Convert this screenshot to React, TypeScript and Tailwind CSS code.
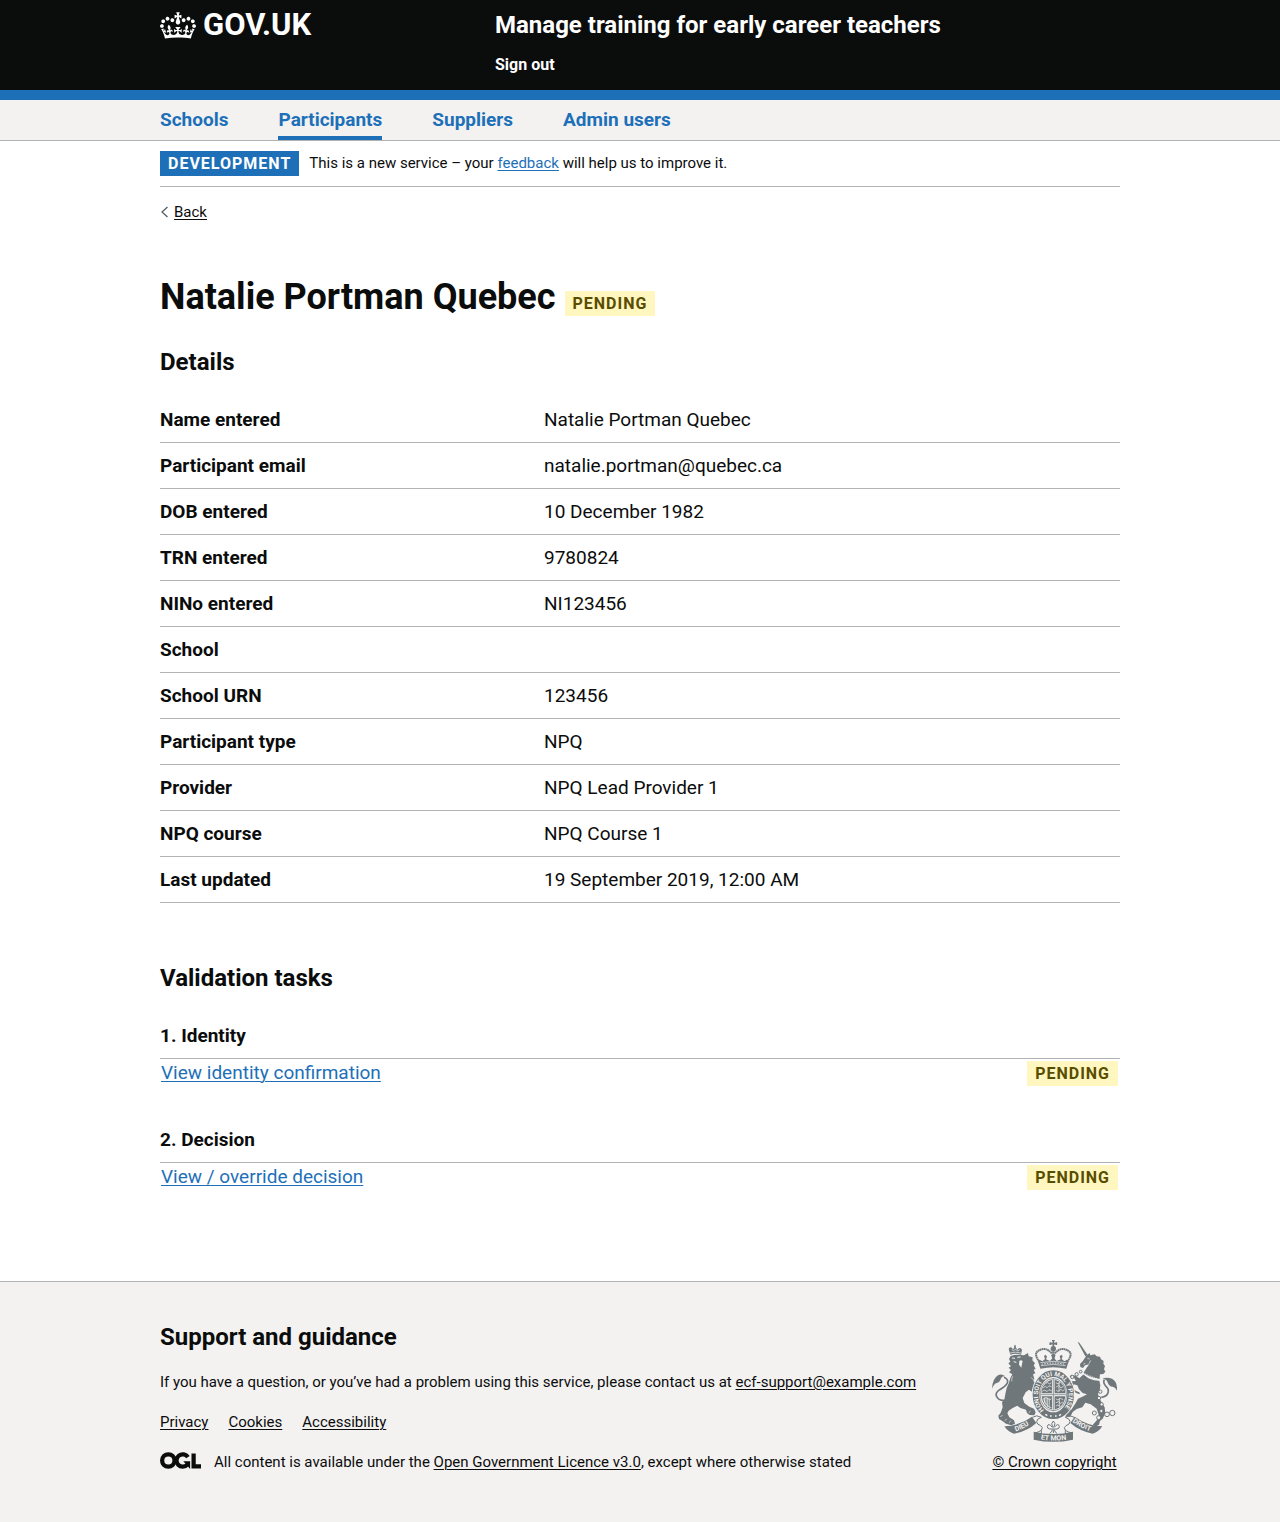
const link = "text-[#1d70b8] underline decoration-1 underline-offset-2";
const darkLink = "text-[#0b0c0c] underline decoration-1 underline-offset-2";
const container = "mx-auto w-full max-w-[960px] max-[990px]:px-4 max-[990px]:max-w-none";

const navItems = [
  { label: "Schools", current: false },
  { label: "Participants", current: true },
  { label: "Suppliers", current: false },
  { label: "Admin users", current: false },
];

const details: [string, string][] = [
  ["Name entered", "Natalie Portman Quebec"],
  ["Participant email", "natalie.portman@quebec.ca"],
  ["DOB entered", "10 December 1982"],
  ["TRN entered", "9780824"],
  ["NINo entered", "NI123456"],
  ["School", ""],
  ["School URN", "123456"],
  ["Participant type", "NPQ"],
  ["Provider", "NPQ Lead Provider 1"],
  ["NPQ course", "NPQ Course 1"],
  ["Last updated", "19 September 2019, 12:00 AM"],
];

function PendingTag() {
  return (
    <strong className="inline-block bg-[#fff7bf] px-2 pt-[5px] pb-1 text-[16px] leading-[16px] font-bold tracking-[1px] text-[#594d00] uppercase">
      Pending
    </strong>
  );
}

function Crown() {
  return (
    <svg aria-hidden="true" className="h-[27px] w-9 shrink-0 fill-white" viewBox="0 0 132 97">
      <path
        fillRule="evenodd"
        d="M25 30.2c3.5 1.5 7.7-.2 9.1-3.7 1.5-3.6-.2-7.8-3.9-9.2-3.6-1.4-7.6.3-9.1 3.9-1.4 3.5.3 7.5 3.9 9zM9 39.5c3.6 1.5 7.8-.2 9.2-3.7 1.5-3.6-.2-7.8-3.9-9.1-3.6-1.5-7.6.2-9.1 3.8-1.4 3.5.3 7.5 3.8 9zM4.4 57.2c3.5 1.5 7.7-.2 9.1-3.8 1.5-3.6-.2-7.7-3.9-9.1-3.5-1.5-7.6.3-9.1 3.8-1.4 3.5.3 7.6 3.9 9.1zm38.3-21.4c3.5 1.5 7.7-.2 9.1-3.8 1.5-3.6-.2-7.7-3.9-9.1-3.6-1.5-7.6.3-9.1 3.8-1.3 3.6.4 7.7 3.9 9.1zm64.4-5.6c-3.6 1.5-7.8-.2-9.1-3.7-1.5-3.6.2-7.8 3.8-9.2 3.6-1.4 7.7.3 9.2 3.9 1.3 3.5-.4 7.5-3.9 9zm15.9 9.3c-3.6 1.5-7.7-.2-9.1-3.7-1.5-3.6.2-7.8 3.7-9.1 3.6-1.5 7.7.2 9.2 3.8 1.5 3.5-.3 7.5-3.8 9zm4.7 17.7c-3.6 1.5-7.8-.2-9.2-3.8-1.5-3.6.2-7.7 3.9-9.1 3.6-1.5 7.7.3 9.2 3.8 1.3 3.5-.4 7.6-3.9 9.1zM89.3 35.8c-3.6 1.5-7.8-.2-9.2-3.8-1.4-3.6.2-7.7 3.9-9.1 3.6-1.5 7.7.3 9.2 3.8 1.4 3.6-.3 7.7-3.9 9.1zM69.7 17.7l8.9 4.7V9.3l-8.9 2.8c-.2-.3-.5-.6-.9-.9L72.4 0H59.6l3.5 11.2c-.3.3-.6.5-.9.9l-8.8-2.8v13.1l8.8-4.7c.3.3.6.7.9.9l-5 15.4v.1c-.2.8-.4 1.6-.4 2.4 0 4.1 3.1 7.5 7 8.1h.2c.3 0 .7.1 1 .1.4 0 .7 0 1-.1h.2c4-.6 7.1-4.1 7.1-8.1 0-.8-.1-1.7-.4-2.4V34l-5.1-15.4c.4-.2.7-.6 1-.9zM66 92.8c16.9 0 32.8 1.1 47.1 3.2 4-16.9 8.9-26.7 14-33.5l-9.6-3.4c1 4.9 1.1 7.2 0 10.2-1.5-1.4-3-4.3-4.2-8.7L108.6 76c2.8-2 5-3.2 7.5-3.3-4.4 9.4-10 11.9-13.6 11.2-4.3-.8-6.3-4.6-5.6-7.9 1-4.7 5.7-5.9 8-.5 4.3-8.7-3-11.4-7.6-8.8 7.1-7.2 7.9-13.5 2.1-21.1-8 6.1-8.1 12.3-4.5 20.8-4.7-5.4-12.1-2.5-9.5 6.2 3.4-5.2 7.9-2 7.2 3.1-.6 4.3-6.4 7.8-13.5 7.2-10.3-.9-10.9-8-11.2-13.8 2.5-.5 7.1 1.8 11 7.3L80.2 60c-4.1 4.4-8 5.3-12.3 5.4 1.4-4.4 8-11.6 8-11.6H55.5s6.4 7.2 7.9 11.6c-4.2-.1-8-1-12.3-5.4l1.4 16.4c3.9-5.5 8.5-7.7 10.9-7.3-.3 5.8-.9 12.8-11.1 13.8-7.2.6-12.9-2.9-13.5-7.2-.7-5 3.8-8.3 7.1-3.1 2.7-8.7-4.6-11.6-9.4-6.2 3.7-8.5 3.6-14.7-4.6-20.8-5.8 7.6-5 13.9 2.2 21.1-4.7-2.6-11.9.1-7.7 8.8 2.3-5.5 7.1-4.2 8.1.5.7 3.3-1.3 7.1-5.7 7.9-3.5.7-9-1.8-13.5-11.2 2.5.1 4.7 1.3 7.5 3.3l-4.7-15.4c-1.2 4.4-2.7 7.2-4.3 8.7-1.1-3-.9-5.3 0-10.2l-9.5 3.4c5 6.9 9.9 16.7 14 33.5 14.8-2.1 30.8-3.2 47.7-3.2z"
      />
    </svg>
  );
}

function OglLogo() {
  return (
    <svg role="img" aria-label="OGL" className="h-[17px] w-[41px] shrink-0" viewBox="0 0 483 196">
      <g fill="none" stroke="#0b0c0c" strokeWidth="50">
        <circle cx="98" cy="98" r="73" />
        <path d="M329 59A73 73 0 1 0 322 147" />
        <path d="M396 16V168H483" />
      </g>
      <path fill="#0b0c0c" d="M275 106h80v88h-3z" />
    </svg>
  );
}

function RoyalArms() {
  const grey = "#6f777b";
  const pale = "#f3f2f1";
  return (
    <svg aria-hidden="true" className="h-[102px] w-[125px]" viewBox="66 60 375 306">
      <defs>
        <path id="garter" d="M222 270A46 57 0 1 1 278 270" />
        <path id="scroll-left" d="M137 334Q165 325 192 304" />
        <path id="scroll-mid" d="M212 358Q250 365 298 358" />
        <path id="scroll-right" d="M307 305Q334 326 366 335" />
      </defs>

      {/* lion */}
      <g fill={grey}>
        <path d="M122 108Q140 102 162 106L174 99 176 109 188 112 187 121 195 130 191 136 197 147 191 149 196 160 189 163 193 176 190 184 203 191 207 200 200 201 206 207 197 210 203 222 206 234 197 233 190 218 177 209 167 217 158 234 163 249 178 260 192 266 197 277 193 286 179 285 171 279 168 269 151 264 142 257 128 264 116 272 112 280 118 292 132 301 135 311 124 316 108 311 97 303 87 297 85 287 92 278 98 262 96 247 103 239 106 222 110 204 117 188 121 174 127 163 117 157 123 150 116 143 123 139 115 130 121 125 117 117z" />
        <path d="M121 104l-5-17q2-8 10-4l3 6 4-8-1-3 3-4 3 4-1 4 5 7 5-5q7-1 9 6l-3 14q-16-5-32 0z" />
        <path d="M66 206q1-30 19-41 12-4 20 4-9-1-12 6-3 12-13 14-8 2-14 17z" />
      </g>
      <path d="M102 172q16 7 9 19-6 10-22 18-15 10-9 21 8 14 24 10" fill="none" stroke={grey} strokeWidth="5" />
      <g fill="none" stroke={pale}>
        <path d="M120 99q17-5 33 0M126 88l4 5 6-5 8 5 5-4" strokeWidth="2" />
        <path d="M126 114l9 1M142 112l10-1M131 125l8 2" strokeWidth="3" />
        <path d="M128 169q-5 10-2 15M183 172l11 11" strokeWidth="2" />
        <path d="M91 290l7-4M104 302l6-5M118 308l5-6M176 278l6-5" strokeWidth="2" />
      </g>
      <path d="M148 122q6-3 10 1l-2 9-2 11-7-9z" fill={pale} />

      {/* unicorn */}
      <g fill={grey}>
        <path d="M323 66l5 2 25 37-7 4z" />
        <path d="M350 106L359 99 361 106 374 103 380 109 390 110 393 118 401 123 400 131 405 138 402 147 406 155 400 162 390 163 388 177 341 158 351 142 358 133 345 136 339 144 331 141 330 132 338 124z" />
        <path d="M341 163L355 175 372 181 388 182 391 196 389 212 384 222 389 236 396 249 404 262 406 280 398 296 390 303 387 314 376 320 368 315 381 300 386 284 380 266 362 253 346 248 337 262 320 267 308 276 301 290 286 290 291 278 305 268 317 249 324 236 340 229 351 223 338 219 327 208 322 196 311 193 307 204 318 213 328 217 330 223 320 220 304 209 300 196 306 184 318 183 312 173 299 171 303 164 317 167 328 175z" />
        <path d="M441 212q2-27-15-36-16-6-29 0 12 1 15 9 5 15 16 15 8 1 13 12z" />
      </g>
      <path d="M394 232q17-3 20-14 4-10-6-19-10-11-5-20" fill="none" stroke={grey} strokeWidth="5" />
      <path d="M338 160Q358 178 390 180" fill="none" stroke={pale} strokeWidth="3" />
      <path d="M343 157Q362 172 389 173" fill="none" stroke={grey} strokeWidth="5" strokeDasharray="4 2" />
      <path d="M352 115l7 2M340 133l6-4M362 121l-5 10" fill="none" stroke={pale} strokeWidth="2" />
      <g fill={pale} stroke={grey} strokeWidth="3">
        <circle cx="391" cy="215" r="5" />
        <circle cx="387" cy="234" r="5" />
        <circle cx="395" cy="253" r="5" />
        <circle cx="394" cy="273" r="5" />
        <circle cx="373" cy="279" r="6" />
        <circle cx="386" cy="293" r="6" />
        <circle cx="411" cy="283" r="7" />
        <circle cx="427" cy="279" r="8" />
        <circle cx="307" cy="171" r="5" />
        <circle cx="320" cy="163" r="5" />
        <circle cx="332" cy="155" r="4" />
      </g>

      {/* crown */}
      <g fill="none" stroke={grey}>
        <path d="M212 130Q190 103 203 94Q226 77 246 101M288 130Q310 103 297 94Q274 77 254 101" strokeWidth="6" strokeDasharray="5 1" />
        <path d="M250 60v22M240 71h20M246 61h8M241 67v8M259 67v8" strokeWidth="5" />
        <path d="M250 90v33" strokeWidth="7" strokeDasharray="5 1" />
      </g>
      <g fill={grey}>
        <circle cx="250" cy="86" r="8" />
        <path d="M204 124l5-5 8 5 8-7-3-9 5-4 4 6-3 8 12 5 7-8-4-10 7-4 7 4-4 10 7 8 12-5-3-8 4-6 5 4-3 9 8 7 8-5 5 5-7 22q-39-9-78 0z" />
      </g>
      <path d="M211 128q39-8 78 0M213 137q37-8 74 0" fill="none" stroke={pale} strokeWidth="2" />
      <path d="M215 133q35-8 70 0" fill="none" stroke={pale} strokeWidth="3" strokeDasharray="4 4" />

      {/* garter */}
      <ellipse cx="250" cy="224" rx="65" ry="76" fill={pale} />
      <ellipse cx="250" cy="224" rx="52" ry="63" fill="none" stroke={grey} strokeWidth="20" />
      <text fontFamily="Roboto" fontSize="19" fontWeight="700" fill={pale}>
        <textPath href="#garter">HONI SOIT QUI MAL Y PENSE</textPath>
      </text>
      <path d="M226 283l6 4M240 288h5M255 288h5M267 287l6-4" stroke={pale} strokeWidth="4" />

      {/* quartered shield */}
      <g transform="translate(250 224) scale(0.95 1.15) translate(-250 -223)">
        <circle cx="250" cy="223" r="42" fill={pale} stroke={grey} strokeWidth="2" />
        <path d="M213 219v-8q6-21 33-27v35zM254 184q29 5 34 29v6h-34zM213 227h33v35q-28-6-33-35zM254 227h34q-4 29-34 35z" fill={grey} />
        <path d="M250 181v84M209 223h82" stroke={grey} strokeWidth="2" />
        <g fill="none" stroke={pale} strokeWidth="2">
          <path d="M218 205l7-4 5 4 6-5 8 2M215 214l8-3 7 4 6-5 9 3M226 194l6-3 5 4 7-3" />
          <path d="M258 192l7 3 7-5M259 203l9-4 5 6 9-3M259 211l6 4 9-6 5 4 7-3M268 190v25" />
          <path d="M219 233q8 22 25 24M222 231v14M227 231v20M232 231v24M237 231v26M219 233q10-6 15 1t10-1" />
          <path d="M258 234l7 3 6-5 10 4M258 244l9-3 5 5 8-4M258 253l6-3 7 3M269 232v22" />
        </g>
      </g>

      {/* scroll */}
      <g fill={grey}>
        <path d="M103 319Q147 318 186 290L199 309Q172 334 132 341Q114 336 103 319z" />
        <path d="M397 319Q353 318 314 290L301 309Q328 333 368 341Q386 336 397 319z" />
        <path d="M191 335Q250 349 309 335V359Q250 372 191 359z" />
      </g>
      <g fill="none" stroke={grey} strokeWidth="3">
        <path d="M187 292q13-9 27 0-14 4-14 13 0 8 12 12 9 4 2 14-9 5-20 9M214 331v10" />
        <path d="M313 292q-13-9-27 0 14 4 14 13 0 8-12 12-9 4-2 14 9 5 20 9M286 331v10" />
      </g>
      <g fontFamily="Roboto" fontSize="21" fontWeight="700" fill={pale}>
        <text>
          <textPath href="#scroll-left">DIEU</textPath>
        </text>
        <text>
          <textPath href="#scroll-mid">ET MON</textPath>
        </text>
        <text>
          <textPath href="#scroll-right">DROIT</textPath>
        </text>
      </g>

      {/* badge between the scrolls */}
      <path
        d="M250 303q-8 8-3 15l3 4 3-4q5-7-3-15zM247 322q-12-15-15-3-1 7 7 8M253 322q12-15 15-3 1 7-7 8M239 327h22M247 329q-1 8-8 11M253 329q1 8 8 11M250 329v10"
        fill="none"
        stroke={grey}
        strokeWidth="3"
      />
    </svg>
  );
}

function Task({ title, action }: { title: string; action: string }) {
  return (
    <section className="mb-[30px]">
      <h3 className="border-b border-[#b1b4b6] py-[10px] text-[19px] leading-[25px] font-bold">{title}</h3>
      <div className="flex items-start justify-between px-px pt-px">
        <a href="#" className={`text-[19px] leading-[25px] ${link}`}>
          {action}
        </a>
        <span className="flex pt-px pr-px pb-px">
          <PendingTag />
        </span>
      </div>
    </section>
  );
}

export default function App() {
  return (
    <div className="bg-white font-['Roboto',sans-serif] text-[#0b0c0c]">
      <header className="border-b-10 border-[#1d70b8] bg-[#0b0c0c] text-white">
        <div className={`${container} grid grid-cols-3 pt-[10px] pb-[15px]`}>
          <a href="#" className="flex items-center gap-[7px] self-start text-[31px] leading-[30px] font-bold">
            <Crown />
            <span>GOV.UK</span>
          </a>
          <div className="col-span-2 pl-[15px]">
            <a href="#" className="block text-[24px] leading-[30px] font-bold">
              Manage training for early career teachers
            </a>
            <a href="#" className="mt-[15px] inline-block align-top text-[16px] leading-[20px] font-bold">
              Sign out
            </a>
          </div>
        </div>
      </header>

      <nav aria-label="Primary navigation" className="border-b border-[#b1b4b6] bg-[#f3f2f1]">
        <ul className={`${container} flex flex-wrap gap-x-[50px]`}>
          {navItems.map((item) => (
            <li key={item.label}>
              <a
                href="#"
                aria-current={item.current ? "page" : undefined}
                className={`block border-b-4 pt-[7px] pb-1 text-[19px] leading-[25px] font-bold text-[#1d70b8] ${
                  item.current ? "border-[#1d70b8]" : "border-transparent"
                }`}
              >
                {item.label}
              </a>
            </li>
          ))}
        </ul>
      </nav>

      <div className={container}>
        <div className="flex items-start gap-[10px] border-b border-[#b1b4b6] py-[10px]">
          <strong className="bg-[#1d70b8] px-2 pt-[5px] pb-1 text-[16px] leading-[16px] font-bold tracking-[1px] text-white uppercase">
            Development
          </strong>
          <span className="text-[15px] leading-[24px]">
            This is a new service – your{" "}
            <a href="#" className={link}>
              feedback
            </a>{" "}
            will help us to improve it.
          </span>
        </div>

        <a href="#" className="mt-[15px] inline-flex items-center gap-[5px] align-top text-[15px] leading-[20px]">
          <svg aria-hidden="true" className="h-3 w-[9px]" viewBox="0 0 9 12">
            <path d="M7.500 1L2 6l5.500 5" fill="none" stroke="#505a5f" strokeWidth="1.200" />
          </svg>
          <span className="underline decoration-1 underline-offset-2">Back</span>
        </a>

        <main className="pt-[55px] pb-[60px]">
          <h1 className="mb-[30px] text-[36px] leading-[40px] font-bold">
            Natalie Portman Quebec <PendingTag />
          </h1>

          <h2 className="mb-5 text-[24px] leading-[30px] font-bold">Details</h2>
          <dl className="mb-[60px] text-[19px] leading-[25px]">
            {details.map(([key, value]) => (
              <div key={key} className="grid grid-cols-[2fr_3fr] border-b border-[#b1b4b6] py-[10px]">
                <dt className="font-bold">{key}</dt>
                <dd>{value}</dd>
              </div>
            ))}
          </dl>

          <h2 className="mb-5 text-[24px] leading-[30px] font-bold">Validation tasks</h2>
          <Task title="1. Identity" action="View identity confirmation" />
          <Task title="2. Decision" action="View / override decision" />
        </main>
      </div>

      <footer className="border-t border-[#b1b4b6] bg-[#f3f2f1] pt-10 pb-[50px] text-[15px] leading-[20px]">
        <div className={`${container} flex items-end justify-between gap-5`}>
          <div>
            <h2 className="mb-5 text-[24px] leading-[30px] font-bold">Support and guidance</h2>
            <p className="mb-5">
              If you have a question, or you’ve had a problem using this service, please contact us at{" "}
              <a href="#" className={darkLink}>
                ecf-support@example.com
              </a>
            </p>
            <ul className="mb-5 flex gap-5">
              {["Privacy", "Cookies", "Accessibility"].map((label) => (
                <li key={label}>
                  <a href="#" className={darkLink}>
                    {label}
                  </a>
                </li>
              ))}
            </ul>
            <div className="flex items-start gap-[13px]">
              <OglLogo />
              <span>
                All content is available under the{" "}
                <a href="#" className={darkLink}>
                  Open Government Licence v3.0
                </a>
                , except where otherwise stated
              </span>
            </div>
          </div>
          <a href="#" className={`flex min-w-[131px] shrink-0 flex-col items-center gap-[10px] ${darkLink}`}>
            <RoyalArms />
            <span>© Crown copyright</span>
          </a>
        </div>
      </footer>
    </div>
  );
}
